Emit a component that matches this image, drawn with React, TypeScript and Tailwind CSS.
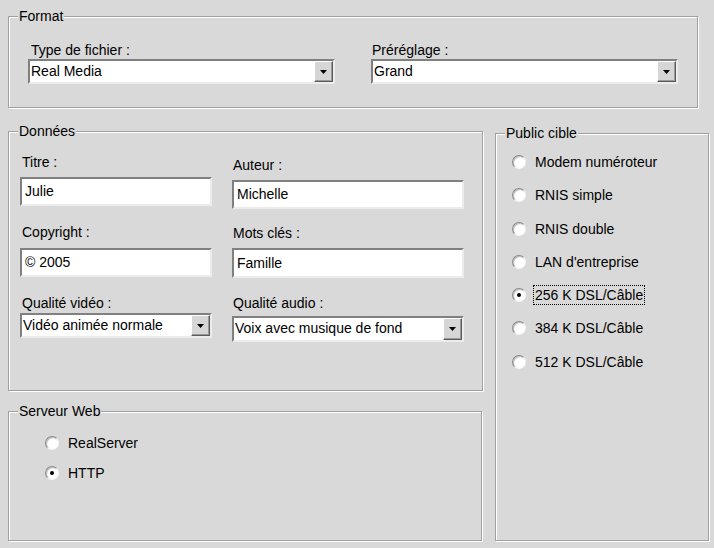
const font = { fontFamily: '"Liberation Sans", Arial, sans-serif' };

function Group({ title, className, children }: { title: string; className: string; children: React.ReactNode }) {
  return (
    <div className={"relative border border-[#a0a0a0] shadow-[inset_1px_1px_0_#fff,1px_1px_0_#fff] " + className}>
      <span className="absolute -top-[9px] left-[9px] bg-[#d9d9d9] px-[1px] leading-[16px]">{title}</span>
      {children}
    </div>
  );
}

function Combo({ value, className }: { value: string; className: string }) {
  return (
    <div
      className={
        "flex border-2 border-t-[#808080] border-l-[#808080] border-r-[#ececec] border-b-[#ececec] bg-white " + className
      }
    >
      <span className="flex-1 truncate pl-[1px] leading-[21px]">{value}</span>
      <span className="flex w-[19px] items-center justify-center border border-t-white border-l-white border-r-[#5a5a5a] border-b-[#5a5a5a] bg-[#d6d6d6] shadow-[inset_-1px_-1px_0_#9a9a9a]">
        <svg width="7" height="4" viewBox="0 0 7 4">
          <path d="M0 0h7L3.5 4z" fill="#000" />
        </svg>
      </span>
    </div>
  );
}

function Field({ value, className }: { value: string; className: string }) {
  return (
    <div
      className={
        "flex items-center border-2 border-t-[#808080] border-l-[#808080] border-r-[#ececec] border-b-[#ececec] bg-white pl-[3px] " +
        className
      }
    >
      {value}
    </div>
  );
}

function Radio({ label, checked, focused }: { label: string; checked?: boolean; focused?: boolean }) {
  return (
    <div className="flex h-[20px] items-center">
      <span className="flex h-[14px] w-[14px] items-center justify-center rounded-full border-[1.5px] border-t-[#8a8a8a] border-l-[#8a8a8a] border-r-[#f4f4f4] border-b-[#f4f4f4] bg-white shadow-[inset_1px_1px_1px_#b8b8b8]">
        {checked && <span className="h-[4px] w-[4px] rounded-full bg-black" />}
      </span>
      <span
        className={
          "ml-[7px] border px-[1px] leading-[18px] " + (focused ? "border-dotted border-black" : "border-transparent")
        }
      >
        {label}
      </span>
    </div>
  );
}

export default function App() {
  return (
    <div className="h-[548px] w-[714px] overflow-hidden bg-[#d9d9d9] pt-[16px] text-[14px] text-black" style={font}>
      <Group title="Format" className="ml-[8px] h-[92px] w-[690px]">
        <div className="flex gap-[36px] pl-[19px] pt-[25px]">
          <div className="w-[307px]">
            <div className="ml-[3px] leading-[16px]">Type de fichier :</div>
            <Combo value="Real Media" className="mt-[1px] h-[25px]" />
          </div>
          <div className="w-[307px]">
            <div className="ml-[1px] leading-[16px]">Préréglage :</div>
            <Combo value="Grand" className="mt-[1px] h-[25px]" />
          </div>
        </div>
      </Group>

      <div className="mt-[23px] flex">
        <div className="ml-[8px] flex w-[475px] flex-col">
          <Group title="Données" className="h-[260px] w-[475px]">
            <div className="flex gap-[20px] pl-[11px] pt-[22px]">
              <div className="w-[192px]">
                <div className="ml-[2px] leading-[16px]">Titre :</div>
                <Field value="Julie" className="mt-[7px] h-[29px]" />
                <div className="ml-[2px] mt-[18px] leading-[16px]">Copyright :</div>
                <Field value="© 2005" className="mt-[8px] h-[29px]" />
                <div className="ml-[2px] mt-[18px] leading-[16px]">Qualité vidéo :</div>
                <Combo value="Vidéo animée normale" className="mt-[2px] h-[25px]" />
              </div>
              <div className="w-[232px]">
                <div className="ml-[1px] mt-[3px] leading-[16px]">Auteur :</div>
                <Field value="Michelle" className="mt-[7px] h-[29px]" />
                <div className="ml-[1px] mt-[16px] leading-[16px]">Mots clés :</div>
                <Field value="Famille" className="mt-[7px] h-[30px]" />
                <div className="ml-[1px] mt-[17px] leading-[16px]">Qualité audio :</div>
                <Combo value="Voix avec musique de fond" className="mt-[5px] h-[26px]" />
              </div>
            </div>
          </Group>

          <Group title="Serveur Web" className="mt-[20px] h-[130px] w-[474px]">
            <div className="flex flex-col gap-[10px] pl-[36px] pt-[21px]">
              <Radio label="RealServer" />
              <Radio label="HTTP" checked />
            </div>
          </Group>
        </div>

        <Group title="Public cible" className="ml-[12px] mt-[2px] h-[408px] w-[214px]">
          <div className="flex flex-col gap-[13.3px] pl-[16px] pt-[18px]">
            <Radio label="Modem numéroteur" />
            <Radio label="RNIS simple" />
            <Radio label="RNIS double" />
            <Radio label="LAN d'entreprise" />
            <Radio label="256 K DSL/Câble" checked focused />
            <Radio label="384 K DSL/Câble" />
            <Radio label="512 K DSL/Câble" />
          </div>
        </Group>
      </div>
    </div>
  );
}
